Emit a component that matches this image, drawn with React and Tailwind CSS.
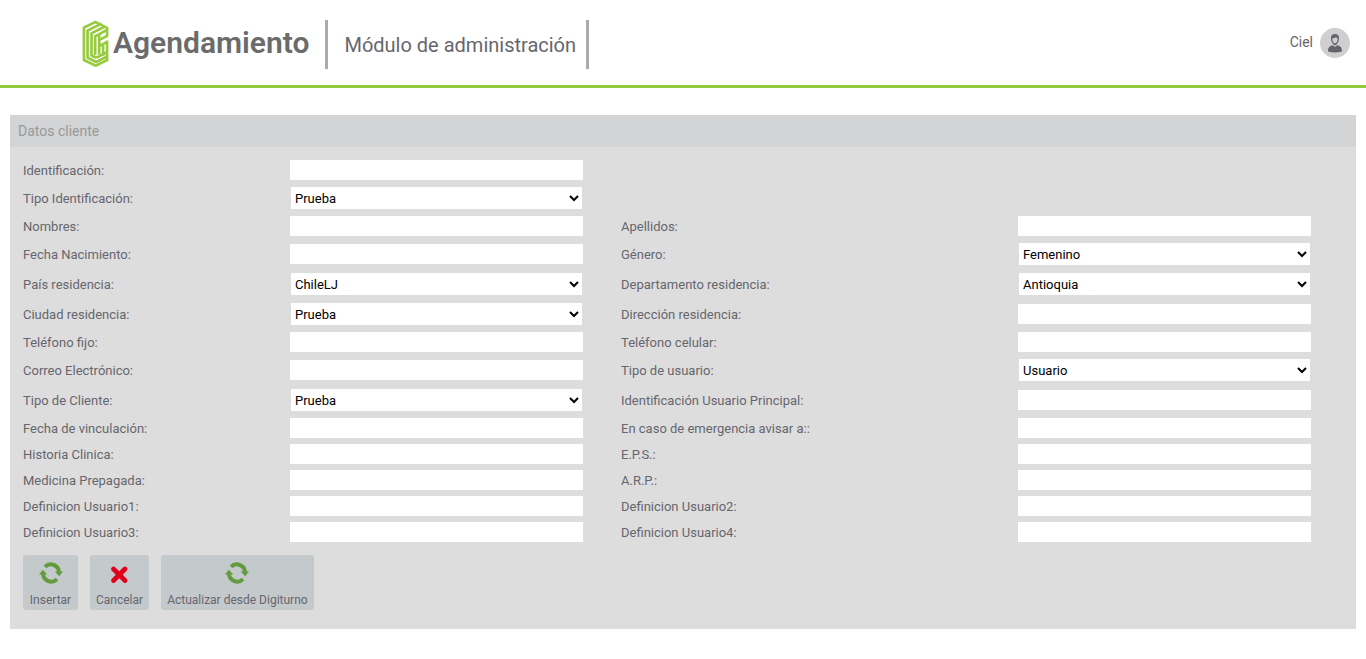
import { useId } from "react";

const rows = [
  [{ label: "Identificación:" }],
  [{ label: "Tipo Identificación:", value: "Prueba" }],
  [{ label: "Nombres:" }, { label: "Apellidos:" }],
  [{ label: "Fecha Nacimiento:" }, { label: "Género:", value: "Femenino" }],
  [{ label: "País residencia:", value: "ChileLJ" }, { label: "Departamento residencia:", value: "Antioquia" }],
  [{ label: "Ciudad residencia:", value: "Prueba" }, { label: "Dirección residencia:" }],
  [{ label: "Teléfono fijo:" }, { label: "Teléfono celular:" }],
  [{ label: "Correo Electrónico:" }, { label: "Tipo de usuario:", value: "Usuario" }],
  [{ label: "Tipo de Cliente:", value: "Prueba" }, { label: "Identificación Usuario Principal:" }],
  [{ label: "Fecha de vinculación:" }, { label: "En caso de emergencia avisar a::" }],
  [{ label: "Historia Clinica:" }, { label: "E.P.S.:" }],
  [{ label: "Medicina Prepagada:" }, { label: "A.R.P.:" }],
  [{ label: "Definicion Usuario1:" }, { label: "Definicion Usuario2:" }],
  [{ label: "Definicion Usuario3:" }, { label: "Definicion Usuario4:" }],
];

function Field({ label, value }) {
  const id = useId();
  return (
    <>
      <label htmlFor={id} className="pt-[2px] leading-5">{label}</label>
      {value ? (
        <div className="py-[3px]">
          <select
            id={id}
            defaultValue={value}
            className="block h-6 w-[293px] border border-[#ddd] bg-white text-black"
          >
            <option>{value}</option>
          </select>
        </div>
      ) : (
        <div className="py-[3px]">
          <input id={id} type="text" className="block h-5 w-[293px] bg-white px-1 text-black" />
        </div>
      )}
    </>
  );
}

function LogoMark() {
  return (
    <svg viewBox="0 0 80 142" className="h-[47px] w-[27px]" fill="none" stroke="#97cb3f" strokeWidth="8" aria-hidden="true">
      <path d="M42 5 5 23V121L41 138 75 121" />
      <path d="M58 11 16 32V114L42 127 75 110" />
      <path d="M70 19 28 40V107L42 114" />
      <path d="M38 5 75 24V48L51 61" />
      <path d="M75 30 39 49V106" />
      <path d="M51 44V104" />
      <path d="M75 66 51 79M75 62V125" />
      <path d="M63 76V108" />
      <path d="M42 114 75 97" />
    </svg>
  );
}

function Refresh() {
  return (
    <svg viewBox="0 0 24 22" className="h-[22px] w-6" aria-hidden="true">
      <g fill="none" stroke="#649b3e" strokeWidth="4">
        <path d="M6 4.800A8.200 8.200 0 0 1 20 11" />
        <path d="M18 17.200A8.200 8.200 0 0 1 4 11" />
      </g>
      <path fill="#649b3e" d="M15.700 9.600H24L20.200 14.200ZM0 12.400H8.300L3.800 7.800Z" />
    </svg>
  );
}

function Cross() {
  return (
    <svg viewBox="0 0 24 22" className="h-[22px] w-6" aria-hidden="true">
      <path d="M5.500 7 17 18.500M17 7 5.500 18.500" stroke="#e1001a" strokeWidth="4.800" strokeLinecap="round" />
    </svg>
  );
}

function Action({ icon, children }) {
  return (
    <button
      type="button"
      className="flex h-[55px] min-w-[55px] flex-col items-center justify-between rounded-[3px] bg-[#c4c9cb] px-[6px] pt-[7px] pb-[2px] text-xs leading-4"
    >
      {icon}
      <span>{children}</span>
    </button>
  );
}

export default function App() {
  return (
    <div className="bg-white font-['Roboto',sans-serif] text-[#66666e]">
      <header className="flex h-22 items-center justify-between border-b-3 border-[#93c83d] pr-4 pl-[82px]">
        <div className="flex items-center pt-1">
          <a href="#" className="flex items-center gap-1 pb-[3px] text-[30px] leading-10 font-semibold text-[#6b6b6b]">
            <LogoMark />
            <span>Agendamiento</span>
          </a>
          <h1 className="ml-4 flex h-[49px] items-center border-x-3 border-[#ababab] pr-[10px] pl-4 text-xl">
            Módulo de administración
          </h1>
        </div>
        <a href="#" className="flex items-center gap-[7px] text-sm">
          <span className="pb-[2px]">Ciel</span>
          <svg viewBox="0 0 30 30" className="size-[30px]" aria-hidden="true">
            <circle cx="15" cy="15" r="15" fill="#cfcfcf" />
            <path fill="#63656a" d="M15 6c-3 0-4.200 2-4 4.500.1 2 .3 3.500 2 5.500L15 17.500 17 16c1.700-2 1.900-3.500 2-5.500C19.200 8 18 6 15 6ZM8 23.500c0-4 1.500-5.500 5-6.200l2 1.700 2-1.700c3.500.7 5 2.200 5 6.200Q15 25.300 8 23.500Z" />
            <path fill="#cfcfcf" d="M12.300 10.500q2.700-.3 3.700-1.200 1 .9 1.700 1.200c0 3-1.300 4.700-2.700 4.700s-2.700-1.700-2.700-4.700Z" />
          </svg>
        </a>
      </header>

      <main className="px-[10px] pt-[27px]">
        <section className="bg-[#ddd]">
          <h2 className="bg-[#d2d4d6] px-2 py-1 text-sm leading-6 text-[#999]">Datos cliente</h2>
          <form className="px-[13px] pt-[10px] pb-[19px] text-[13px]">
            {rows.map((row) => (
              <div key={row[0].label} className="grid grid-cols-[267fr_331fr_397fr_325fr] items-center">
                {row.map((field) => (
                  <Field key={field.label} {...field} />
                ))}
              </div>
            ))}
            <div className="flex gap-3 pt-[10px]">
              <Action icon={<Refresh />}>Insertar</Action>
              <Action icon={<Cross />}>Cancelar</Action>
              <Action icon={<Refresh />}>Actualizar desde Digiturno</Action>
            </div>
          </form>
        </section>
      </main>
    </div>
  );
}
